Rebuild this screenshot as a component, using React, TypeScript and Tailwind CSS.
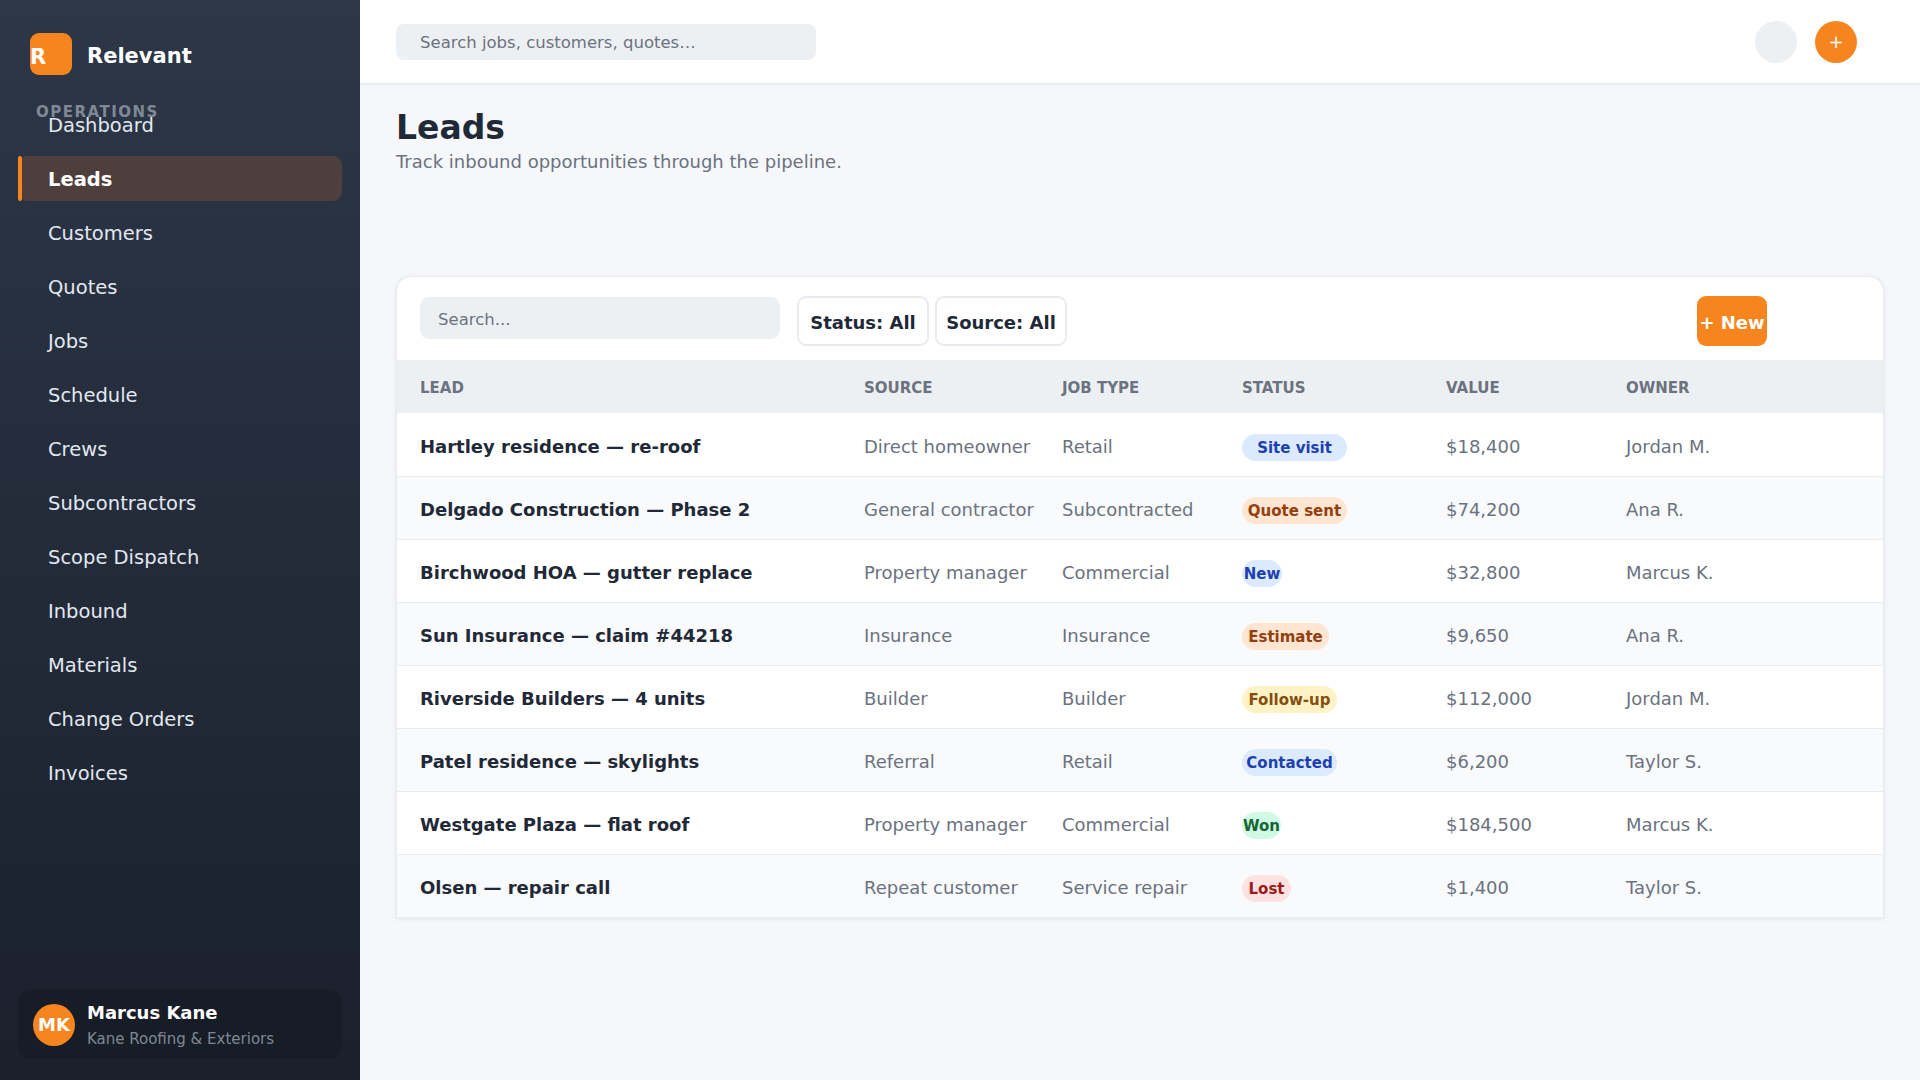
const navItems = ['Dashboard', 'Leads', 'Customers', 'Quotes', 'Jobs', 'Schedule', 'Crews', 'Subcontractors', 'Scope Dispatch', 'Inbound', 'Materials', 'Change Orders', 'Invoices']

const leads = [
  { name: 'Hartley residence — re-roof', source: 'Direct homeowner', type: 'Retail', status: 'Site visit', badge: 'w-[105px] bg-[#dbeafe] text-[#1e40af]', value: '$18,400', owner: 'Jordan M.' },
  { name: 'Delgado Construction — Phase 2', source: 'General contractor', type: 'Subcontracted', status: 'Quote sent', badge: 'w-[105px] bg-[#ffe6d2] text-[#92400e]', value: '$74,200', owner: 'Ana R.' },
  { name: 'Birchwood HOA — gutter replace', source: 'Property manager', type: 'Commercial', status: 'New', badge: 'w-[40px] bg-[#dbeafe] text-[#1e40af]', value: '$32,800', owner: 'Marcus K.' },
  { name: 'Sun Insurance — claim #44218', source: 'Insurance', type: 'Insurance', status: 'Estimate', badge: 'w-[87px] bg-[#ffe6d2] text-[#92400e]', value: '$9,650', owner: 'Ana R.' },
  { name: 'Riverside Builders — 4 units', source: 'Builder', type: 'Builder', status: 'Follow-up', badge: 'w-[95px] bg-[#fef3c7] text-[#854d0e]', value: '$112,000', owner: 'Jordan M.' },
  { name: 'Patel residence — skylights', source: 'Referral', type: 'Retail', status: 'Contacted', badge: 'w-[95px] bg-[#dbeafe] text-[#1e40af]', value: '$6,200', owner: 'Taylor S.' },
  { name: 'Westgate Plaza — flat roof', source: 'Property manager', type: 'Commercial', status: 'Won', badge: 'w-[39px] bg-[#d1fae5] text-[#166534]', value: '$184,500', owner: 'Marcus K.' },
  { name: 'Olsen — repair call', source: 'Repeat customer', type: 'Service repair', status: 'Lost', badge: 'w-[49px] bg-[#fee2e2] text-[#991b1b]', value: '$1,400', owner: 'Taylor S.' },
]

function Sidebar() {
  return (
    <aside className="w-[360px] h-[1080px] shrink-0 flex flex-col bg-gradient-to-b from-[#2d3748] to-[#1a202c] px-[18px]">
      <div className="flex items-center gap-[15px] pl-[12px] pt-[33px]">
        <div className="w-[42px] h-[42px] rounded-[9px] bg-[#f6851f] text-white font-bold text-[21px] leading-[48px]">R</div>
        <span className="text-white font-bold text-[21px] pt-[5px]">Relevant</span>
      </div>
      <div className="mt-[28px] -mb-[19px] pl-[18px] text-[15px] leading-[18px] font-bold tracking-[1.5px] uppercase text-[#808896]">Operations</div>
      <nav className="flex flex-col gap-[9px]">
        {navItems.map((item) =>
          item === 'Leads' ? (
            <div key={item} className="h-[45px] flex items-center rounded-[9px] bg-[#4e3f3c] text-white font-bold text-[19.5px]">
              <div className="w-[4px] h-full shrink-0 rounded-[2px] bg-[#f6851f]"></div>
              <span className="pl-[26px] pt-[2px]">{item}</span>
            </div>
          ) : (
            <div key={item} className="h-[45px] flex items-center pt-[2px] pl-[30px] text-[#e2e8f0] text-[19.5px]">
              {item}
            </div>
          )
        )}
      </nav>
      <div className="mt-auto mb-[21px] h-[69px] rounded-[12px] bg-[#171d27] flex items-center gap-[12px] pl-[15px]">
        <div className="w-[42px] h-[42px] rounded-full bg-[#f6851f] text-white font-bold text-[18px] flex items-center justify-center">MK</div>
        <div className="pt-[2px]">
          <div className="text-white font-bold text-[18px] leading-[24px]">Marcus Kane</div>
          <div className="text-[#7f8794] text-[15px] leading-[24px] mt-[2px]">Kane Roofing &amp; Exteriors</div>
        </div>
      </div>
    </aside>
  )
}

export default function App() {
  return (
    <div className="flex w-[1920px] h-[1080px] overflow-hidden bg-[#f5f7fa] font-['DejaVu_Sans',sans-serif]">
      <Sidebar />
      <main className="flex-1 min-w-0">
        {/* top bar */}
        <header className="h-[85px] bg-white border-b-2 border-[#e8ebf0] flex items-center pl-[36px]">
          <div className="w-[420px] h-[36px] rounded-[8px] bg-[#edf0f3] pl-[24px] pt-[3px] flex items-center text-[16.5px] text-[#6b7280]">Search jobs, customers, quotes…</div>
          <div className="ml-auto flex gap-[18px] mr-[63px]">
            <div className="w-[42px] h-[42px] rounded-full bg-[#edf0f3]"></div>
            <div className="w-[42px] h-[42px] rounded-full bg-[#f6851f] text-white text-[18px] flex items-center justify-center">+</div>
          </div>
        </header>

        <div className="px-[36px]">
          <h1 className="text-[33px] font-bold text-[#1f2937] leading-[40px] mt-[23px]">Leads</h1>
          <p className="text-[18px] text-[#6b7280] leading-[24px] mt-[2px]">Track inbound opportunities through the pipeline.</p>

          <section className="mt-[102px] w-[1488px] rounded-t-[15px] bg-white border border-[#e8ebf0] shadow-[0_1px_4px_rgba(0,0,0,0.09)]">
            {/* toolbar */}
            <div className="h-[83px] flex items-start pt-[19px] pl-[23px]">
              <div className="mt-[1px] w-[360px] h-[42px] rounded-[9px] bg-[#edf0f3] pl-[18px] pt-[5px] flex items-center text-[16.5px] text-[#6b7280]">Search...</div>
              <button className="ml-[17px] w-[132px] h-[50px] pt-[3px] rounded-[9px] border-2 border-[#e8ebf0] text-[18px] font-bold text-[#1f2937]">Status: All</button>
              <button className="ml-[6px] w-[132px] h-[50px] pt-[3px] rounded-[9px] border-2 border-[#e8ebf0] text-[18px] font-bold text-[#1f2937]">Source: All</button>
              <button className="ml-auto mr-[116px] w-[70px] h-[50px] pt-[2px] rounded-[9px] bg-[#f6851f] text-white text-[18px] font-bold whitespace-nowrap">+ New</button>
            </div>

            <table className="w-full table-fixed border-collapse">
              <colgroup>
                <col className="w-[443px]" />
                <col className="w-[198px]" />
                <col className="w-[180px]" />
                <col className="w-[204px]" />
                <col className="w-[180px]" />
                <col />
              </colgroup>
              <thead>
                <tr className="h-[53px] bg-[#edf0f3] text-left text-[15px] font-bold uppercase text-[#6b7280]">
                  <th className="pl-[23px] pt-[4px]">Lead</th>
                  <th className="pl-[24px] pt-[4px]">Source</th>
                  <th className="pl-[24px] pt-[4px]">Job type</th>
                  <th className="pl-[24px] pt-[4px]">Status</th>
                  <th className="pl-[24px] pt-[4px]">Value</th>
                  <th className="pl-[24px] pt-[4px]">Owner</th>
                </tr>
              </thead>
              <tbody>
                {leads.map((lead, i) => (
                  <tr key={lead.name} className={`h-[63px] text-[18px] text-[#6b7280] border-b last:border-b-0 border-[#e8ecf1] ${i % 2 === 1 ? 'bg-[#f9fafc]' : 'bg-white'}`}>
                    <td className="pl-[23px] pt-[4px] font-bold text-[#1f2937]">{lead.name}</td>
                    <td className="pl-[24px] pt-[4px]">{lead.source}</td>
                    <td className="pl-[24px] pt-[4px]">{lead.type}</td>
                    <td className="pl-[24px] pt-[4px]">
                      <span className={`inline-block h-[27px] rounded-full text-center text-[15px] leading-[29px] font-bold align-middle ${lead.badge}`}>{lead.status}</span>
                    </td>
                    <td className="pl-[24px] pt-[4px]">{lead.value}</td>
                    <td className="pl-[24px] pt-[4px]">{lead.owner}</td>
                  </tr>
                ))}
              </tbody>
            </table>
          </section>
        </div>
      </main>
    </div>
  )
}
